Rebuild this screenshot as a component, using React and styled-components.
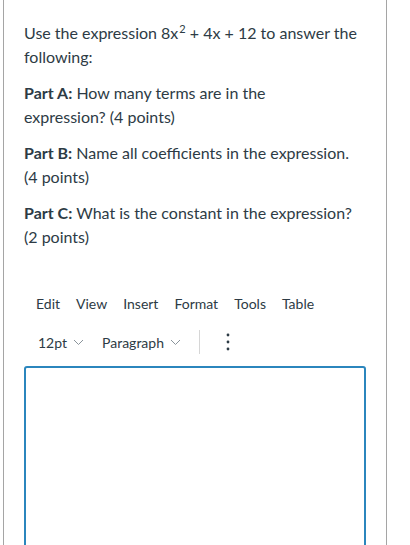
import React from 'react';
import styled, { createGlobalStyle } from 'styled-components';

const GlobalStyle = createGlobalStyle`
  body {
    margin: 0;
    background: #ffffff;
    font-family: Lato, "Open Sans", sans-serif;
    color: #2d3b45;
  }
`;

const Panel = styled.div`
  margin-left: 3px;
  width: 384px;
  min-height: 545px;
  border-left: 1px solid #a5a5a5;
  border-right: 1px solid #a5a5a5;
  padding: 21px 0 0 20px;
  box-sizing: border-box;
`;

const Para = styled.p`
  margin: 0 0 12px;
  width: 345px;
  font-size: 16px;
  line-height: 24px;
`;

const Sup = styled.span`
  display: inline-block;
  font-size: 11px;
  line-height: 11px;
  vertical-align: top;
  margin-top: 2px;
  margin-left: 1px;
`;

const Label = styled.strong`
  font-weight: 700;
`;

const MenuBar = styled.div`
  display: flex;
  gap: 16px;
  margin: 45px 0 0 12px;
  font-size: 14px;
  line-height: 20px;
`;

const Toolbar = styled.div`
  display: flex;
  align-items: center;
  margin: 15px 0 0 14px;
  height: 26px;
  font-size: 14px;
`;

const Select = styled.span`
  display: inline-flex;
  align-items: center;
  gap: 6px;
  margin-right: ${(p) => p.gap}px;
`;

const Divider = styled.span`
  width: 1px;
  height: 24px;
  background: #d6d6d6;
  margin-right: 26px;
`;

const Editor = styled.div`
  margin-top: 11px;
  width: 342px;
  height: 200px;
  border: 2px solid #2b86bd;
  border-radius: 3px;
  box-sizing: border-box;
`;

const Chevron = () => (
  <svg width="11" height="7" viewBox="0 0 11 7" fill="none">
    <path d="M1 1l4.5 4.5L10 1" stroke="#8a949b" strokeWidth="1" />
  </svg>
);

const Dots = () => (
  <svg width="4" height="18" viewBox="0 0 4 18">
    <circle cx="2" cy="2" r="1.4" fill="#2d3b45" />
    <circle cx="2" cy="9" r="1.4" fill="#2d3b45" />
    <circle cx="2" cy="16" r="1.4" fill="#2d3b45" />
  </svg>
);

export default function App() {
  return (
    <>
      <GlobalStyle />
      <Panel>
        <Para>
          Use the expression 8x<Sup>2</Sup> + 4x + 12 to answer the following:
        </Para>
        <Para>
          <Label>Part A:</Label> How many terms are in the
          <br />
          expression? (4 points)
        </Para>
        <Para>
          <Label>Part B:</Label> Name all coefficients in the expression.
          <br />
          (4 points)
        </Para>
        <Para>
          <Label>Part C:</Label> What is the constant in the expression?
          <br />
          (2 points)
        </Para>
        <MenuBar>
          <span>Edit</span>
          <span>View</span>
          <span>Insert</span>
          <span>Format</span>
          <span>Tools</span>
          <span>Table</span>
        </MenuBar>
        <Toolbar>
          <Select gap={18}>12pt <Chevron /></Select>
          <Select gap={18}>Paragraph <Chevron /></Select>
          <Divider />
          <Dots />
        </Toolbar>
        <Editor />
      </Panel>
    </>
  );
}
